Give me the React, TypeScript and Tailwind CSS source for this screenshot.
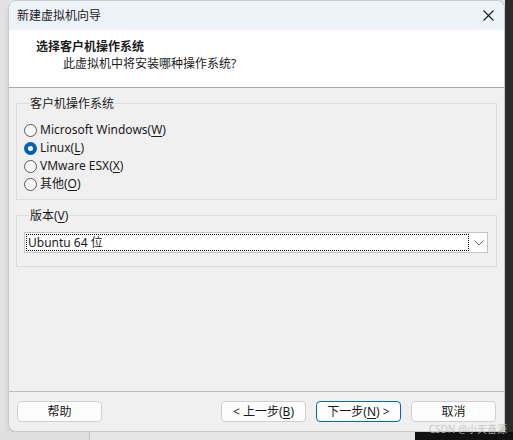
const font = { fontFamily: '"Noto Sans", "Noto Sans CJK SC", sans-serif' };

function U({ children }: { children: string }) {
  return <span className="underline underline-offset-2">{children}</span>;
}

function Radio({ checked, children }: { checked?: boolean; children: React.ReactNode }) {
  return (
    <div className="flex h-[18px] items-center">
      {checked ? (
        <span className="flex h-[13px] w-[13px] items-center justify-center rounded-full bg-[#005fb8]">
          <span className="h-[5px] w-[5px] rounded-full bg-white" />
        </span>
      ) : (
        <span className="h-[13px] w-[13px] rounded-full border border-[#5a5a5a] bg-[#f7f7f7]" />
      )}
      <span className="ml-[3px] text-[12px] text-[#1a1a1a]">{children}</span>
    </div>
  );
}

function Btn({ primary, children }: { primary?: boolean; children: React.ReactNode }) {
  return (
    <button
      className={
        primary
          ? "flex h-[21px] w-[85px] items-center justify-center rounded-[4px] border border-[#0067c0] bg-[#fdfdfd] text-[12px] text-[#1a1a1a]"
          : "flex h-[21px] w-[85px] items-center justify-center rounded-[4px] border border-[#d0d0d0] bg-[#fdfdfd] text-[12px] text-[#1a1a1a]"
      }
    >
      {children}
    </button>
  );
}

export default function App() {
  return (
    <div className="relative h-[440px] w-[513px] overflow-hidden bg-[#e4e4e4]" style={font}>
      <div className="flex h-[432px]">
        <div className="w-[8px] bg-[#e2e2e2]" />
        <div className="flex w-[497px] flex-col overflow-hidden rounded-[8px] border border-[#c9c9c9] bg-[#f0f0f0] shadow-md">
          {/* title bar */}
          <div className="flex h-[29px] shrink-0 items-center justify-between bg-[#eef2f9] pl-[8px] pr-[9px]">
            <span className="text-[12px] text-[#1a1a1a]">新建虚拟机向导</span>
            <svg width="11" height="11" viewBox="0 0 11 11" className="mr-[1px]">
              <path d="M0.5 0.5 L10.5 10.5 M10.5 0.5 L0.5 10.5" stroke="#1a1a1a" strokeWidth="1.1" />
            </svg>
          </div>
          {/* header */}
          <div className="flex h-[58px] shrink-0 flex-col border-b border-[#a9a9a9] bg-white pl-[27px] pt-[8px]">
            <span className="text-[12px] font-bold leading-[17px] text-[#1a1a1a]">选择客户机操作系统</span>
            <span className="pl-[27px] text-[12px] leading-[17px] text-[#1a1a1a]">此虚拟机中将安装哪种操作系统?</span>
          </div>
          {/* body */}
          <div className="flex flex-1 flex-col px-[7px] pt-[7px]">
            <fieldset className="border border-[#dcdcdc] pb-[6px] pl-[7px]">
              <legend className="ml-[5px] px-[1px] text-[12px] leading-[17px] text-[#1a1a1a]">客户机操作系统</legend>
              <div className="flex flex-col pt-[9px]">
                <Radio>Microsoft Windows(<U>W</U>)</Radio>
                <Radio checked>Linux(<U>L</U>)</Radio>
                <Radio>VMware ESX(<U>X</U>)</Radio>
                <Radio>其他(<U>O</U>)</Radio>
              </div>
            </fieldset>
            <fieldset className="mt-[7px] border border-[#dcdcdc] pb-[13px] pl-[7px] pr-[8px]">
              <legend className="ml-[5px] px-[1px] text-[12px] leading-[17px] text-[#1a1a1a]">
                版本(<U>V</U>)
              </legend>
              <div className="mt-[8px] flex h-[21px] items-center border border-[#c4c4c4] bg-white pl-[1px] pr-[3px]">
                <div className="flex h-[17px] flex-1 items-center border border-dotted border-black pl-[1px] text-[12px] text-[#1a1a1a]">
                  Ubuntu 64 位
                </div>
                <svg width="10" height="6" viewBox="0 0 10 6" className="ml-[5px]">
                  <path d="M0.5 0.5 L5 5 L9.5 0.5" stroke="#707070" strokeWidth="1" fill="none" />
                </svg>
              </div>
            </fieldset>
          </div>
          {/* footer */}
          <div className="flex h-[40px] shrink-0 items-start border-t border-[#bdbdbd] px-[8px] pt-[9px]">
            <Btn>帮助</Btn>
            <div className="flex-1" />
            <div className="flex gap-[10px]">
              <Btn>&lt; 上一步(<U>B</U>)</Btn>
              <Btn primary>下一步(<U>N</U>) &gt;</Btn>
              <Btn>取消</Btn>
            </div>
          </div>
        </div>
        <div className="flex-1 bg-[#2b2b2b]" />
      </div>
      <div className="flex h-[8px]">
        <div className="w-[90px] border-r border-[#c4c4c4] bg-[#dedede]" />
        <div className="w-[325px] bg-[#e6e6e6]" />
        <div className="flex-1 bg-[#111111]" />
      </div>
      <span className="absolute bottom-[5px] right-[6px] text-[10px] leading-[12px] text-[#bdbdbd] opacity-80">
        CSDN @小天奋源
      </span>
    </div>
  );
}
